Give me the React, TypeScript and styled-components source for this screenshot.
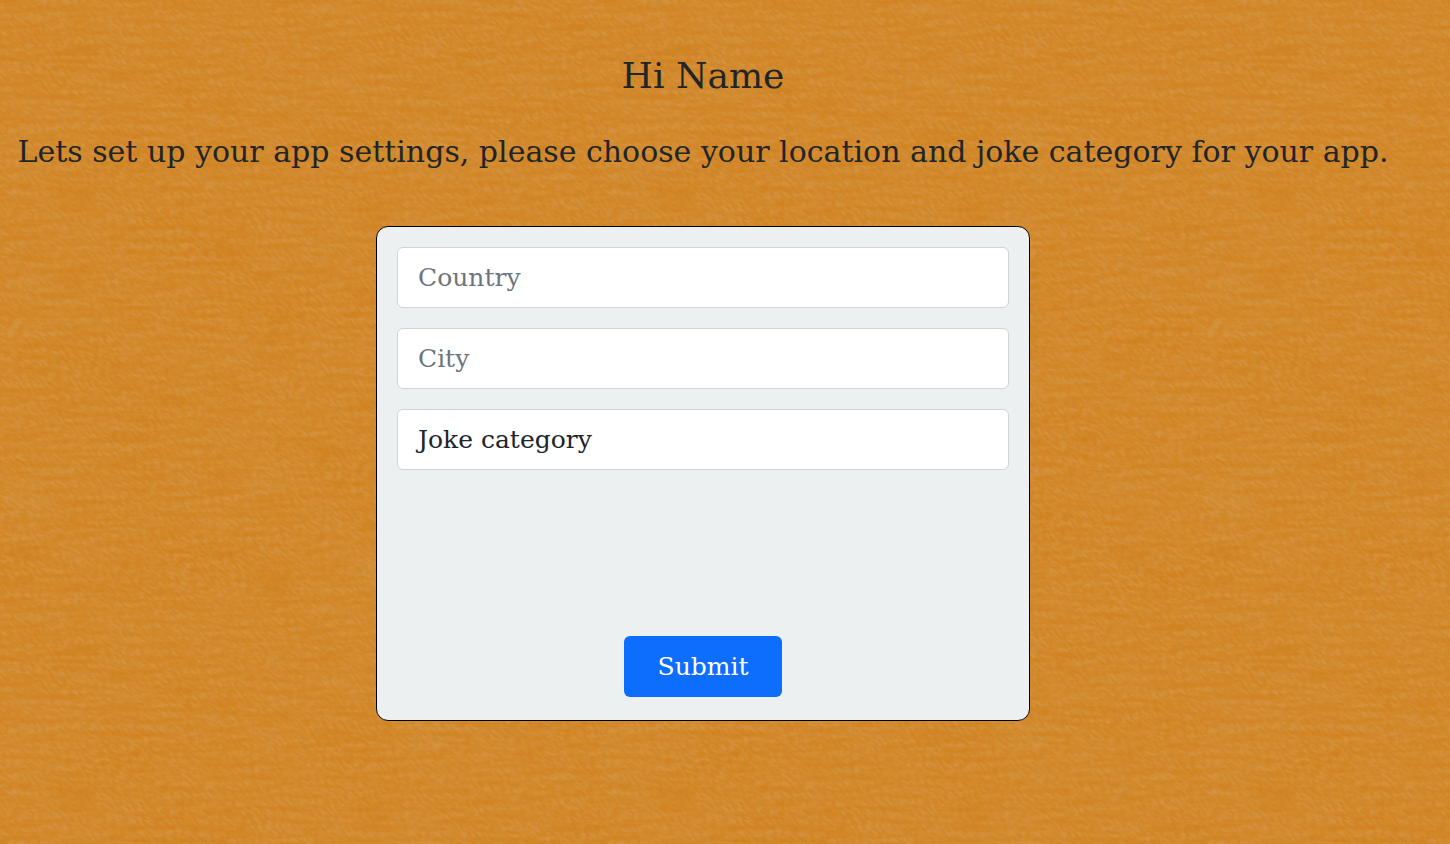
import React from "react";
import styled, { createGlobalStyle, css } from "styled-components";

// Cloth tile: faint worn patches, thin horizontal threads and a slanted twill grain.
const cloth = `<svg xmlns='http://www.w3.org/2000/svg' width='600' height='600'>
<filter id='patch' x='0' y='0' width='100%' height='100%' color-interpolation-filters='sRGB'>
<feTurbulence type='fractalNoise' baseFrequency='0.01 0.015' numOctaves='2' seed='7' stitchTiles='stitch'/>
<feColorMatrix values='0 0 0 0 0.83  0 0 0 0 0.57  0 0 0 0 0.24  2 0 0 0 -0.6'/>
</filter>
<filter id='thread' x='0' y='0' width='100%' height='100%' color-interpolation-filters='sRGB'>
<feTurbulence type='fractalNoise' baseFrequency='0.02 0.16' numOctaves='3' seed='11' stitchTiles='stitch'/>
<feColorMatrix values='0 0 0 0 0.81  0 0 0 0 0.49  0 0 0 0 0.09  2.4 0 0 0 -0.8'/>
</filter>
<filter id='twill' x='0' y='0' width='100%' height='100%' color-interpolation-filters='sRGB'>
<feTurbulence type='fractalNoise' baseFrequency='0.14 0.36' numOctaves='2' seed='3'/>
<feColorMatrix values='0 0 0 0 0.84  0 0 0 0 0.59  0 0 0 0 0.27  3 0 0 0 -1.1'/>
</filter>
<rect width='600' height='600' fill='#d08526'/>
<rect width='600' height='600' filter='url(#patch)' opacity='0.4'/>
<g transform='rotate(35 300 300)'><rect x='-150' y='-150' width='900' height='900' filter='url(#twill)' opacity='0.75'/></g>
<rect width='600' height='600' filter='url(#thread)' opacity='0.5'/>
</svg>`;

const GlobalStyle = createGlobalStyle`
  *, *::before, *::after { box-sizing: border-box; }
  body {
    margin: 0;
    min-height: 100vh;
    color: #212529;
    background: #d18a2f url("data:image/svg+xml,${encodeURIComponent(cloth).replace(/'/g, "%27").replace(/\(/g, "%28").replace(/\)/g, "%29")}");
    font-family: "Roboto Slab", "DejaVu Serif", serif;
  }
`;

const Page = styled.main`
  display: flex;
  flex-direction: column;
  align-items: center;
  padding: 52px 44px 48px 0;
`;

const Title = styled.h1`
  margin: 0;
  font-size: 36px;
  font-weight: 400;
  line-height: 48px;
`;

const Intro = styled.p`
  margin: 28px 0 50px;
  font-size: 30px;
  line-height: 48px;
  text-align: center;
`;

const Card = styled.form`
  display: flex;
  flex-direction: column;
  gap: 20px;
  width: 100%;
  max-width: 654px;
  padding: 20px 20px 23px;
  border: 1px solid #000;
  border-radius: 12px;
  background: #ecf0f1;
`;

const field = css`
  width: 100%;
  height: 61px;
  padding: 0 16px;
  border: 1px solid #ced4da;
  border-radius: 6px;
  background: #fff;
  color: #212529;
  font-family: inherit;
  font-size: 25px;
  text-indent: 4px;
  appearance: none;
`;

const TextField = styled.input`
  ${field}
  &::placeholder { color: #6c757d; opacity: 1; }
`;

const SelectField = styled.select`
  ${field}
`;

const SubmitButton = styled.button`
  align-self: center;
  height: 61px;
  margin-top: 146px;
  padding: 0 34px;
  border: 0;
  border-radius: 6px;
  background: #0d6efd;
  color: #fff;
  font-family: inherit;
  font-size: 25px;
  cursor: pointer;
`;

export default function App() {
  return (
    <>
      <GlobalStyle />
      <Page>
        <Title>Hi Name</Title>
        <Intro>
          Lets set up your app settings, please choose your location and joke category for your app.
        </Intro>
        <Card onSubmit={(event) => event.preventDefault()}>
          <TextField name="country" aria-label="Country" placeholder="Country" />
          <TextField name="city" aria-label="City" placeholder="City" />
          <SelectField name="category" aria-label="Joke category">
            <option>Joke category</option>
          </SelectField>
          <SubmitButton type="submit">Submit</SubmitButton>
        </Card>
      </Page>
    </>
  );
}
